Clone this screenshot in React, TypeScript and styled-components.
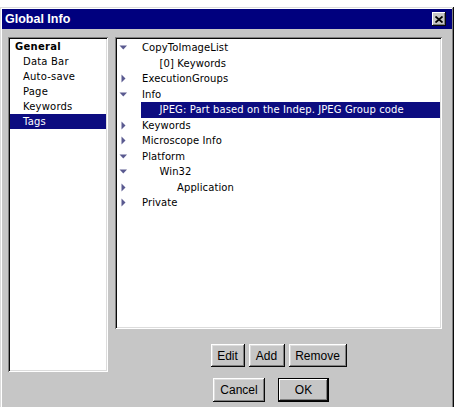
import React from 'react';
import styled, { createGlobalStyle } from 'styled-components';

const GlobalStyle = createGlobalStyle`
  html, body {
    margin: 0;
    padding: 0;
    background: #ffffff;
    overflow: hidden;
  }
  body {
    font-family: "DejaVu Sans", Verdana, sans-serif;
  }
`;

type TreeNode = {
    label: string;
    level: number;
    toggle?: 'open' | 'closed';
    selected?: boolean;
};

const categories = ['Data Bar', 'Auto-save', 'Page', 'Keywords', 'Tags'];

const tags: TreeNode[] = [
    { label: 'CopyToImageList', level: 0, toggle: 'open' },
    { label: '[0] Keywords', level: 1 },
    { label: 'ExecutionGroups', level: 0, toggle: 'closed' },
    { label: 'Info', level: 0, toggle: 'open' },
    { label: 'JPEG: Part based on the Indep. JPEG Group code', level: 1, selected: true },
    { label: 'Keywords', level: 0, toggle: 'closed' },
    { label: 'Microscope Info', level: 0, toggle: 'closed' },
    { label: 'Platform', level: 0, toggle: 'open' },
    { label: 'Win32', level: 1, toggle: 'open' },
    { label: 'Application', level: 2, toggle: 'closed' },
    { label: 'Private', level: 0, toggle: 'closed' },
];

const Toggle = ({ state }: { state?: 'open' | 'closed' }) => {
    if (!state) return <ToggleCell />;
    return (
        <ToggleCell>
            <svg width="9" height="9" viewBox="0 0 9 9">
                {state === 'open'
                    ? <polygon points="0.5,2.5 8,2.5 4.25,6.5" fill="#5a5a90" />
                    : <polygon points="2.5,0.5 6.5,4.5 2.5,8.5" fill="#5a5a90" />}
            </svg>
        </ToggleCell>
    );
};

const App = () => {
    return (
        <>
            <GlobalStyle />
            <Window>
                <TitleBar>
                    <Title>Global Info</Title>
                    <CloseButton>
                        <svg width="8" height="7" viewBox="0 0 8 7">
                            <path d="M0.5 0.5 L7.5 6.5 M7.5 0.5 L0.5 6.5" stroke="#000" strokeWidth="1.8" />
                        </svg>
                    </CloseButton>
                </TitleBar>
                <Body>
                    <CategoryList>
                        <CategoryHead>General</CategoryHead>
                        {categories.map((c) => (
                            <CategoryItem key={c} selected={c === 'Tags'}>{c}</CategoryItem>
                        ))}
                    </CategoryList>
                    <RightColumn>
                        <TreePanel>
                            {tags.map((t, i) => (
                                <TreeRow key={i}>
                                    <Toggle state={t.toggle} />
                                    <TreeLabel level={t.level} selected={t.selected}>
                                        <span>{t.label}</span>
                                    </TreeLabel>
                                </TreeRow>
                            ))}
                        </TreePanel>
                        <ButtonRow>
                            <Button width={34}>Edit</Button>
                            <Button width={36}>Add</Button>
                            <Button width={58}>Remove</Button>
                        </ButtonRow>
                        <ButtonRow gap={13} shift={15} top={11}>
                            <Button width={52} height={24}>Cancel</Button>
                            <Button width={51} height={24} isDefault>OK</Button>
                        </ButtonRow>
                    </RightColumn>
                </Body>
            </Window>
        </>
    );
};

export default App;

const Window = styled.div`
  margin-top: 7px;
  width: 454px;
  height: 412px;
  box-sizing: border-box;
  padding: 2px;
  background: #c6c6c6;
  box-shadow: inset -1px -1px #0a0a0a, inset 1px 1px #dcdcdc,
    inset -2px -2px #808080, inset 2px 2px #ffffff;
`;

const TitleBar = styled.div`
  height: 20px;
  background: #00007e;
  display: flex;
  align-items: center;
  justify-content: space-between;
  padding: 0 6px 0 3px;
`;

const Title = styled.span`
  font-family: "Liberation Sans", Arial, sans-serif;
  font-weight: bold;
  font-size: 12.5px;
  color: #ffffff;
`;

const CloseButton = styled.div`
  width: 14px;
  height: 14px;
  box-sizing: border-box;
  background: #c6c6c6;
  display: flex;
  align-items: center;
  justify-content: center;
  box-shadow: inset -1px -1px #0a0a0a, inset 1px 1px #ffffff,
    inset -2px -2px #808080;
`;

const Body = styled.div`
  display: grid;
  grid-template-columns: 100px 327px;
  column-gap: 7px;
  padding: 8px 10px 0 6px;
  align-items: start;
`;

const Sunken = styled.div`
  box-sizing: border-box;
  background: #ffffff;
  padding: 2px;
  box-shadow: inset 1px 1px #808080, inset -1px -1px #ffffff,
    inset 2px 2px #0a0a0a, inset -2px -2px #dcdcdc;
`;

const CategoryList = styled(Sunken)`
  height: 335px;
  font-size: 10px;
  color: #000;
`;

const CategoryHead = styled.div`
  height: 15px;
  line-height: 15px;
  padding-left: 5px;
  font-weight: bold;
  letter-spacing: 0.3px;
`;

const CategoryItem = styled.div<{ selected?: boolean }>`
  height: 15px;
  line-height: 15px;
  padding-left: 13px;
  letter-spacing: 0.2px;
  background: ${({ selected }) => (selected ? '#0c0c80' : 'transparent')};
  color: ${({ selected }) => (selected ? '#ffffff' : '#000000')};
`;

const RightColumn = styled.div`
  display: flex;
  flex-direction: column;
`;

const TreePanel = styled(Sunken)`
  height: 292px;
  padding-top: 3px;
  font-size: 10px;
  color: #000;
`;

const TreeRow = styled.div`
  display: flex;
  height: 15.5px;
  line-height: 15.5px;
`;

const ToggleCell = styled.div`
  width: 24px;
  flex-shrink: 0;
  display: flex;
  align-items: center;
  padding-left: 2px;
  box-sizing: border-box;
`;

const TreeLabel = styled.div<{ level: number; selected?: boolean }>`
  flex: 1;
  white-space: nowrap;
  padding-left: ${({ level }) => level * 17.5 + 1}px;
  background: ${({ selected }) => (selected ? '#0c0c80' : 'transparent')};
  color: ${({ selected }) => (selected ? '#ffffff' : '#000000')};
  letter-spacing: 0.1px;
`;

const ButtonRow = styled.div<{ gap?: number; shift?: number; top?: number }>`
  display: flex;
  justify-content: center;
  gap: ${({ gap }) => gap ?? 4}px;
  padding-right: ${({ shift }) => shift ?? 0}px;
  margin-top: ${({ top }) => top ?? 15}px;
`;

const Button = styled.div<{ width: number; height?: number; isDefault?: boolean }>`
  width: ${({ width }) => width}px;
  height: ${({ height }) => height ?? 23}px;
  box-sizing: border-box;
  display: flex;
  align-items: center;
  justify-content: center;
  font-family: "Liberation Sans", Arial, sans-serif;
  font-size: 12px;
  color: #000;
  background: #c6c6c6;
  box-shadow: ${({ isDefault }) =>
        isDefault
            ? 'inset -1px -1px #000, inset 1px 1px #000, inset -2px -2px #0a0a0a, inset 2px 2px #ffffff, inset -3px -3px #808080'
            : 'inset -1px -1px #0a0a0a, inset 1px 1px #ffffff, inset -2px -2px #808080, inset 2px 2px #dcdcdc'};
`;
